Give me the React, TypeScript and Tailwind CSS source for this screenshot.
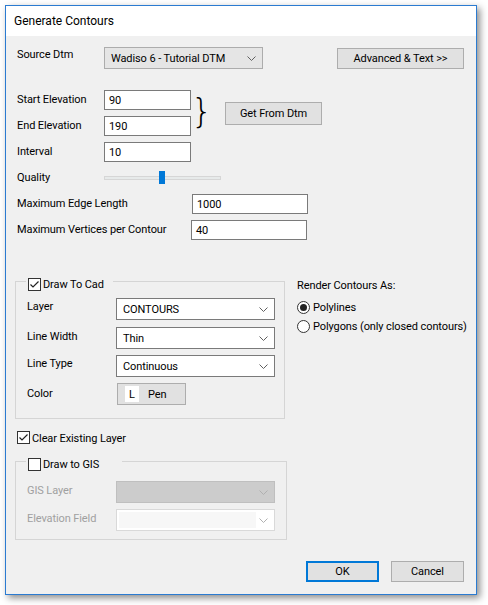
import React from "react";

const font = { fontFamily: 'Roboto, "Noto Sans", sans-serif' };

function Chevron({ color = "#606060" }: { color?: string }) {
    return (
        <svg width="9" height="5" viewBox="0 0 9 5" className="shrink-0">
            <path d="M0.5 0.5 L4.5 4.5 L8.5 0.5" fill="none" stroke={color} strokeWidth="1" />
        </svg>
    );
}

function CheckBox({ checked }: { checked: boolean }) {
    return (
        <div className="w-[13px] h-[13px] border border-[#333333] bg-white shrink-0 flex items-center justify-center">
            {checked && (
                <svg width="11" height="11" viewBox="0 0 11 11">
                    <path d="M1.5 5.5 L4 8 L9.5 2.5" fill="none" stroke="#222222" strokeWidth="1.2" />
                </svg>
            )}
        </div>
    );
}

function Radio({ checked }: { checked: boolean }) {
    return (
        <div className="w-[13px] h-[13px] rounded-full border border-[#333333] bg-white shrink-0 flex items-center justify-center">
            {checked && <div className="w-[7px] h-[7px] rounded-full bg-[#222222]" />}
        </div>
    );
}

function TextBox({ value, w }: { value: string; w: string }) {
    return (
        <div className={`${w} h-[20px] border border-[#7a7a7a] bg-white flex items-center pl-[4px] leading-none`}>
            {value}
        </div>
    );
}

function Combo({ value, editable = true }: { value: string; editable?: boolean }) {
    return (
        <div
            className={`w-[159px] h-[22px] border flex items-center justify-between pl-[6px] pr-[6px] shrink-0 ${
                editable ? "bg-white border-[#7a7a7a]" : "bg-[#e5e5e5] border-[#acacac]"
            }`}
        >
            <span className="leading-none">{value}</span>
            <Chevron />
        </div>
    );
}

function Button({ label, w, h = "h-[22px]" }: { label: string; w: string; h?: string }) {
    return (
        <div className={`${w} ${h} border border-[#adadad] bg-[#e1e1e1] flex items-center justify-center leading-none shrink-0`}>
            {label}
        </div>
    );
}

export default function App() {
    return (
        <div className="w-[488px] h-[605px] bg-white pt-[5px] pl-[5px] text-[11px] tracking-[-0.1px] whitespace-nowrap" style={font}>
            <div className="w-[472px] h-[590px] border border-[#2b7bd1] bg-[#f0f0f0] flex flex-col shadow-[3px_3px_7px_rgba(0,0,0,0.45)] text-black">
                {/* title */}
                <div className="h-[30px] bg-white flex items-center pl-[8px] text-[12px] tracking-normal shrink-0">Generate Contours</div>

                <div className="flex flex-col pl-[9px] pr-[12px]">
                    {/* source dtm */}
                    <div className="flex items-start mt-[11px] h-[22px]">
                        <div className="w-[89px] shrink-0 pl-[2px] leading-4">Source Dtm</div>
                        <Combo value="Wadiso 6 - Tutorial DTM" editable={false} />
                        <div className="ml-[74px] mt-[1px]">
                            <Button label="Advanced & Text >>" w="w-[127px]" h="h-[21px]" />
                        </div>
                    </div>

                    {/* start / end elevation */}
                    <div className="flex items-start mt-[21px]">
                        <div className="flex flex-col gap-[6px]">
                            <div className="flex items-center h-[20px]">
                                <div className="w-[89px] pl-[2px] mt-[1px]">Start Elevation</div>
                                <TextBox value="90" w="w-[87px]" />
                            </div>
                            <div className="flex items-center h-[20px]">
                                <div className="w-[89px] pl-[2px] mt-[1px]">End Elevation</div>
                                <TextBox value="190" w="w-[87px]" />
                            </div>
                        </div>
                        <div
                            className="w-[16px] mt-[3px] text-[34px] leading-[36px] h-[38px] font-light"
                            style={{ fontFamily: '"DejaVu Sans", sans-serif' }}
                        >
                            {"}"}
                        </div>
                        <div className="ml-[18px] mt-[12px]">
                            <Button label="Get From Dtm" w="w-[97px]" h="h-[23px]" />
                        </div>
                    </div>

                    {/* interval */}
                    <div className="flex items-center h-[20px] mt-[6px]">
                        <div className="w-[89px] pl-[2px] mt-[1px]">Interval</div>
                        <TextBox value="10" w="w-[87px]" />
                    </div>

                    {/* quality */}
                    <div className="flex items-center h-[14px] mt-[9px]">
                        <div className="w-[89px] pl-[2px] mt-[1px]">Quality</div>
                        <div className="relative w-[117px] h-[14px] flex items-center">
                            <div className="w-full h-[4px] bg-[#e7eaea] border border-[#d6d6d6]" />
                            <div className="absolute left-[55px] top-0 w-[6px] h-[13px] bg-[#0078d7]" />
                        </div>
                    </div>

                    {/* max edge */}
                    <div className="flex items-center h-[20px] mt-[9px]">
                        <div className="w-[177px] pl-[2px] mt-[1px]">Maximum Edge Length</div>
                        <TextBox value="1000" w="w-[116px]" />
                    </div>
                    <div className="flex items-center h-[20px] mt-[6px]">
                        <div className="w-[176px] pl-[2px] mt-[1px]">Maximum Vertices per Contour</div>
                        <TextBox value="40" w="w-[116px]" />
                    </div>

                    {/* draw to cad + render */}
                    <div className="flex items-start mt-[41px]">
                        <div className="w-[270px] shrink-0 h-[138px] border border-[#d5d5d5] flex flex-col pl-[11px]">
                            <div className="-mt-[5px] -ml-[1px] w-fit bg-[#f0f0f0] pl-[2px] pr-[9px] h-[14px] flex items-center gap-[2px]">
                                <CheckBox checked />
                                <span className="leading-none mt-[1px]">Draw To Cad</span>
                            </div>
                            <div className="flex items-start h-[22px] mt-[7px]">
                                <div className="w-[89px] leading-4 mt-[1px]">Layer</div>
                                <Combo value="CONTOURS" />
                            </div>
                            <div className="flex items-start h-[22px] mt-[7px]">
                                <div className="w-[89px] leading-4 mt-[2px]">Line Width</div>
                                <Combo value="Thin" />
                            </div>
                            <div className="flex items-start h-[22px] mt-[6px]">
                                <div className="w-[89px] leading-4 mt-[1px]">Line Type</div>
                                <Combo value="Continuous" />
                            </div>
                            <div className="flex items-center h-[22px] mt-[6px]">
                                <div className="w-[90px]">Color</div>
                                <div className="w-[69px] h-[22px] border border-[#adadad] bg-[#e1e1e1] flex items-center pl-[7px]">
                                    <div className="w-[14px] h-[16px] bg-white flex items-center justify-center text-[11px] leading-none">
                                        L
                                    </div>
                                    <span className="ml-[9px] leading-none">Pen</span>
                                </div>
                            </div>
                        </div>

                        <div className="ml-[12px] flex flex-col -mt-[3px]">
                            <div className="h-[16px] leading-4">Render Contours As:</div>
                            <div className="flex items-center gap-[3px] h-[16px] mt-[5px]">
                                <Radio checked />
                                <span className="leading-none">Polylines</span>
                            </div>
                            <div className="flex items-center gap-[3px] h-[16px] mt-[3px]">
                                <Radio checked={false} />
                                <span className="leading-none">Polygons (only closed contours)</span>
                            </div>
                        </div>
                    </div>

                    {/* clear existing */}
                    <div className="flex items-center gap-[2px] h-[13px] mt-[12px] pl-[2px]">
                        <CheckBox checked />
                        <span className="leading-none mt-[1px]">Clear Existing Layer</span>
                    </div>

                    {/* draw to gis */}
                    <div className="w-[272px] h-[79px] border border-[#d5d5d5] flex flex-col pl-[11px] mt-[17px]">
                        <div className="-mt-[5px] -ml-[1px] w-fit bg-[#f0f0f0] pl-[2px] pr-[23px] h-[14px] flex items-center gap-[2px]">
                            <CheckBox checked={false} />
                            <span className="leading-none mt-[1px]">Draw to GIS</span>
                        </div>
                        <div className="flex items-center h-[22px] mt-[10px]">
                            <div className="w-[89px] text-[#a0a0a0] -mt-[2px]">GIS Layer</div>
                            <div className="w-[159px] h-[22px] border border-[#bfbfbf] bg-[#cccccc] flex items-center justify-end pr-[6px]">
                                <Chevron color="#b0b0b0" />
                            </div>
                        </div>
                        <div className="flex items-center h-[22px] mt-[6px]">
                            <div className="w-[89px] text-[#a0a0a0] -mt-[2px]">Elevation Field</div>
                            <div className="w-[159px] h-[22px] border border-[#d9d9d9] bg-white flex items-center justify-between pl-[2px] pr-[6px]">
                                <div className="w-[137px] h-[16px] bg-[#f7f7f7]" />
                                <Chevron color="#b0b0b0" />
                            </div>
                        </div>
                    </div>

                    {/* ok / cancel */}
                    <div className="flex justify-end gap-[12px] mt-[21px]">
                        <div className="w-[73px] h-[21px] border-2 border-[#0078d7] bg-[#e1e1e1] flex items-center justify-center leading-none">
                            OK
                        </div>
                        <Button label="Cancel" w="w-[73px]" h="h-[21px]" />
                    </div>
                </div>
            </div>
        </div>
    );
}
